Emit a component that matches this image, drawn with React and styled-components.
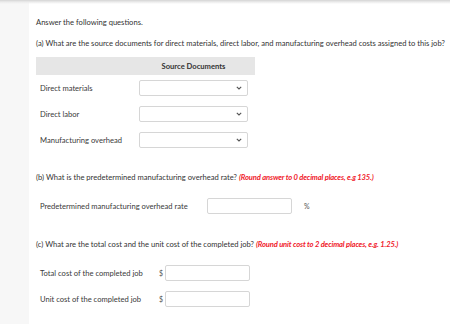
import React from 'react';
import styled, { createGlobalStyle } from 'styled-components';

const GlobalStyle = createGlobalStyle`
  *, *::before, *::after {
    box-sizing: border-box;
  }
  html, body {
    margin: 0;
    padding: 0;
    background: #ffffff;
    font-family: Lato, "Open Sans", Arial, sans-serif;
  }
`;

const Page = styled.div`
  position: relative;
  display: flex;
  width: 450px;
  height: 324px;
  overflow: hidden;
  background: #ffffff;
`;

const TopShadow = styled.div`
  position: absolute;
  left: 0;
  top: 0;
  right: 0;
  height: 4px;
  background: linear-gradient(#d4d4d4, #ececec 50%, rgba(255, 255, 255, 0));
`;

const Sidebar = styled.div`
  width: 29px;
  flex: none;
  background: #f7f7f7;
`;

const Content = styled.div`
  flex: 1;
  padding: 17px 0 0 7px;
  color: #333;
  font-size: 7.6px;
  line-height: 10px;
`;

const Paragraph = styled.p`
  margin: ${(p) => p.$top || 0}px 0 ${(p) => p.$gap || 0}px;
  white-space: nowrap;
`;

const Hint = styled.span`
  color: #f0202a;
  font-weight: 700;
  font-style: italic;
  letter-spacing: -0.15px;
`;

const Table = styled.div`
  width: 219px;
  display: flex;
  flex-direction: column;
`;

const HeaderBar = styled.div`
  display: grid;
  grid-template-columns: 103px 109px;
  height: 18px;
  align-items: center;
  background: #e6e6e6;
  font-weight: 700;
  color: #333;
  margin-bottom: 5px;
`;

const HeaderCell = styled.div`
  grid-column: 2;
  text-align: center;
`;

const TableRow = styled.div`
  display: grid;
  grid-template-columns: 103px 109px;
  align-items: center;
  & + & {
    margin-top: 10px;
  }
`;

const Label = styled.div`
  padding-left: 4px;
  color: #3a3a3a;
  white-space: nowrap;
`;

const SelectBox = styled.div`
  height: 16px;
  border: 1px solid #d6d6d6;
  border-radius: 2px;
  background: #fff;
  display: flex;
  align-items: center;
  justify-content: flex-end;
  padding-right: 5px;
`;

const Row = styled.div`
  display: flex;
  align-items: center;
  margin-bottom: ${(p) => p.$gap || 0}px;
`;

const RowLabel = styled.div`
  width: ${(p) => p.$w}px;
  padding-left: 4px;
  color: #3a3a3a;
  white-space: nowrap;
  flex: none;
`;

const Input = styled.div`
  width: 85px;
  height: 16px;
  border: 1px solid #d6d6d6;
  border-radius: 2px;
  background: #fff;
`;

const Unit = styled.span`
  color: #555;
  font-size: 7px;
  margin: ${(p) => p.$m};
`;

function Chevron() {
  return (
    <svg width="6" height="4" viewBox="0 0 6 4">
      <path d="M0.8 0.8 L3 3 L5.2 0.8" fill="none" stroke="#555" strokeWidth="1.1" />
    </svg>
  );
}

const sources = ['Direct materials', 'Direct labor', 'Manufacturing overhead'];

export default function App() {
  return (
    <>
      <GlobalStyle />
      <Page>
        <TopShadow />
        <Sidebar />
        <Content>
          <Paragraph $gap={11}>Answer the following questions.</Paragraph>
          <Paragraph $gap={9}>
            (a) What are the source documents for direct materials, direct labor, and manufacturing overhead costs assigned to this job?
          </Paragraph>
          <Table>
            <HeaderBar>
              <HeaderCell>Source Documents</HeaderCell>
            </HeaderBar>
            {sources.map((s) => (
              <TableRow key={s}>
                <Label>{s}</Label>
                <SelectBox>
                  <Chevron />
                </SelectBox>
              </TableRow>
            ))}
          </Table>
          <Paragraph $top={24} $gap={16}>
            (b) What is the predetermined manufacturing overhead rate? <Hint>(Round answer to 0 decimal places, e.g 135.)</Hint>
          </Paragraph>
          <Row $gap={25}>
            <RowLabel $w={171}>Predetermined manufacturing overhead rate</RowLabel>
            <Input />
            <Unit $m="0 0 0 12px">%</Unit>
          </Row>
          <Paragraph $gap={16}>
            (c) What are the total cost and the unit cost of the completed job? <Hint>(Round unit cost to 2 decimal places, e.g. 1.25.)</Hint>
          </Paragraph>
          <Row $gap={10}>
            <RowLabel $w={123}>Total cost of the completed job</RowLabel>
            <Unit $m="0 2px 0 0">$</Unit>
            <Input />
          </Row>
          <Row>
            <RowLabel $w={123}>Unit cost of the completed job</RowLabel>
            <Unit $m="0 2px 0 0">$</Unit>
            <Input />
          </Row>
        </Content>
      </Page>
    </>
  );
}
